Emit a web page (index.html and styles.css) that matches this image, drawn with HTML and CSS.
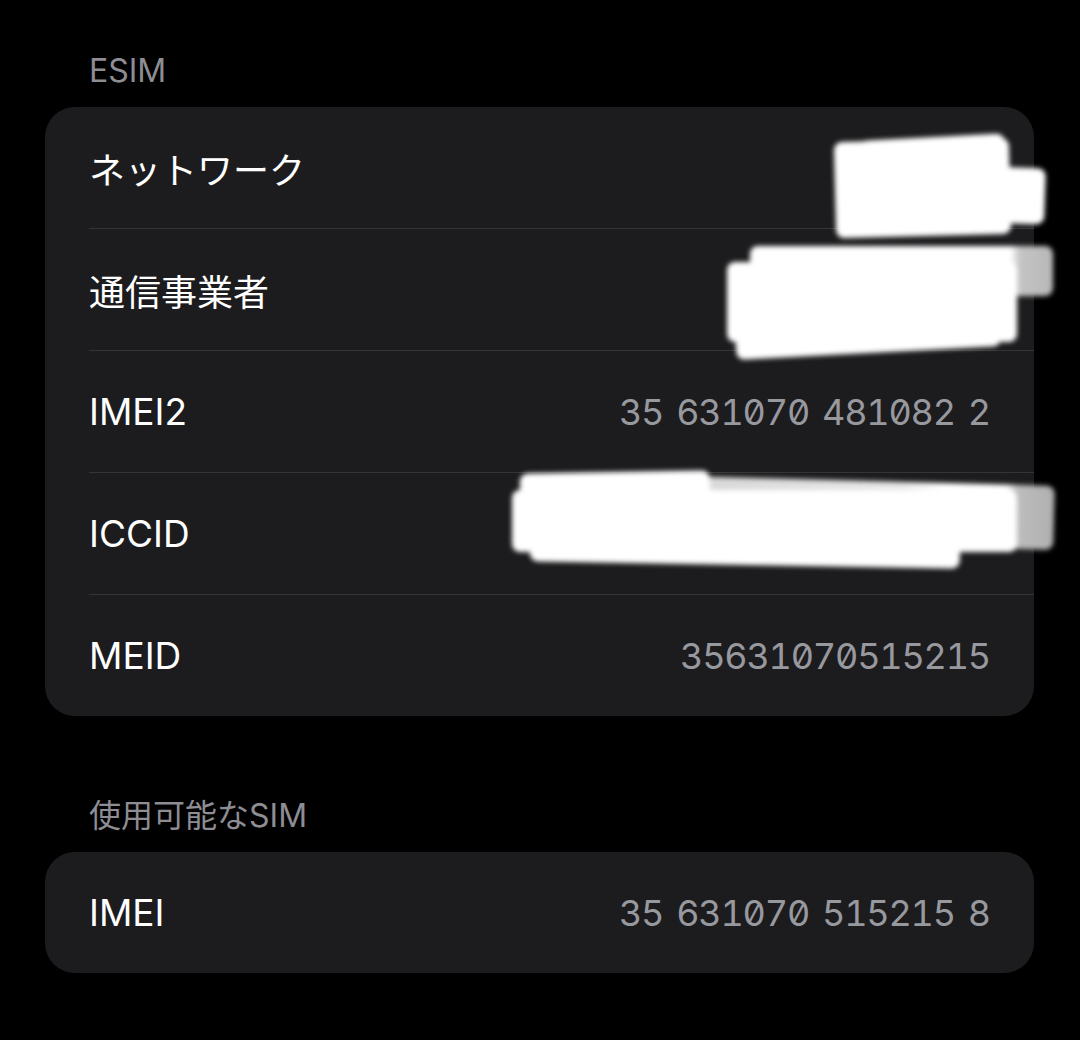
FILE: index.html
```html
<!DOCTYPE html>
<html>
<head>
    <title>SIM</title>
    <link rel="stylesheet" href="styles.css">
</head>
<body>
    <div class="page">
        <div class="section-title first">ESIM</div>
        <div class="card">
            <!-- redaction scribbles -->
            <div class="scribble">
                <div class="s n1"></div>
                <div class="s n2"></div>
                <div class="s n3"></div>
                <div class="s c2"></div>
                <div class="s c1"></div>
                <div class="s c3"></div>
                <div class="s i3"></div>
                <div class="s i1"></div>
                <div class="s i2"></div>
                <div class="s i4"></div>
            </div>

            <div class="row">
                <span class="label ja">ネットワーク</span>
            </div>
            <div class="row">
                <span class="label ja">通信事業者</span>
            </div>
            <div class="row">
                <span class="label">IMEI2</span>
                <span class="value">35 631070 481082 2</span>
            </div>
            <div class="row">
                <span class="label">ICCID</span>
            </div>
            <div class="row">
                <span class="label">MEID</span>
                <span class="value">35631070515215</span>
            </div>
        </div>

        <div class="section-title">使用可能なSIM</div>
        <div class="card">
            <div class="row">
                <span class="label">IMEI</span>
                <span class="value">35 631070 515215 8</span>
            </div>
        </div>
    </div>
</body>
</html>
```

FILE: styles.css
```css
body {
    margin: 0;
    background: #000;
    font-family: "Inter", "Noto Sans CJK JP", sans-serif;
    color: #fff;
}
.page {
    padding: 0 46px 0 45px;
}
.section-title {
    height: 40px;
    line-height: 40px;
    font-size: 32px;
    color: #8d8d93;
    padding-left: 44px;
    margin: 80px 0 16px;
}
.section-title.first {
    margin-top: 51px;
}
.card {
    position: relative;
    background: #1c1c1e;
    border-radius: 30px;
}
.row {
    display: flex;
    align-items: center;
    justify-content: space-between;
    min-height: 121px;
    margin-left: 44px;
    padding-right: 44px;
    border-bottom: 1px solid #343437;
}
.row:last-child {
    border-bottom: none;
}
.label {
    font-size: 37px;
}
.label.ja {
    font-size: 36px;
}
.value {
    font-size: 36px;
    letter-spacing: -1.2px;
    word-spacing: 4.5px;
    color: #98989f;
    font-feature-settings: "tnum", "zero";
}
.scribble {
    position: absolute;
    left: 0;
    top: 0;
    z-index: 1;
    filter: blur(2.5px);
}
.s {
    position: absolute;
    background: #fff;
    border-radius: 8px;
}
.n1 { left: 790px; top: 33px; width: 175px; height: 96px; transform: rotate(-1.5deg); }
.n2 { left: 800px; top: 58px; width: 200px; height: 56px; transform: rotate(2deg); }
.n3 { left: 815px; top: 30px; width: 145px; height: 30px; transform: rotate(-3deg); }
.c1 { left: 682px; top: 155px; width: 290px; height: 80px; }
.c2 { left: 705px; top: 139px; width: 303px; height: 50px; background: linear-gradient(to right, #fff 86%, #c4c4c4 89%, #b8b8b8 100%); }
.c3 { left: 690px; top: 190px; width: 265px; height: 56px; transform: rotate(-3deg); }
.i1 { left: 467px; top: 383px; width: 505px; height: 62px; }
.i2 { left: 475px; top: 365px; width: 190px; height: 34px; transform: rotate(-1deg); }
.i3 { left: 635px; top: 374px; width: 374px; height: 64px; transform: rotate(1.5deg); background: linear-gradient(to right, #d6d6d6 0, #e8e8e8 60%, #fff 70%, #fff 87%, #bdbdbd 90%, #b0b0b0 100%); }
.i4 { left: 485px; top: 422px; width: 430px; height: 36px; transform: rotate(1deg); }
```
